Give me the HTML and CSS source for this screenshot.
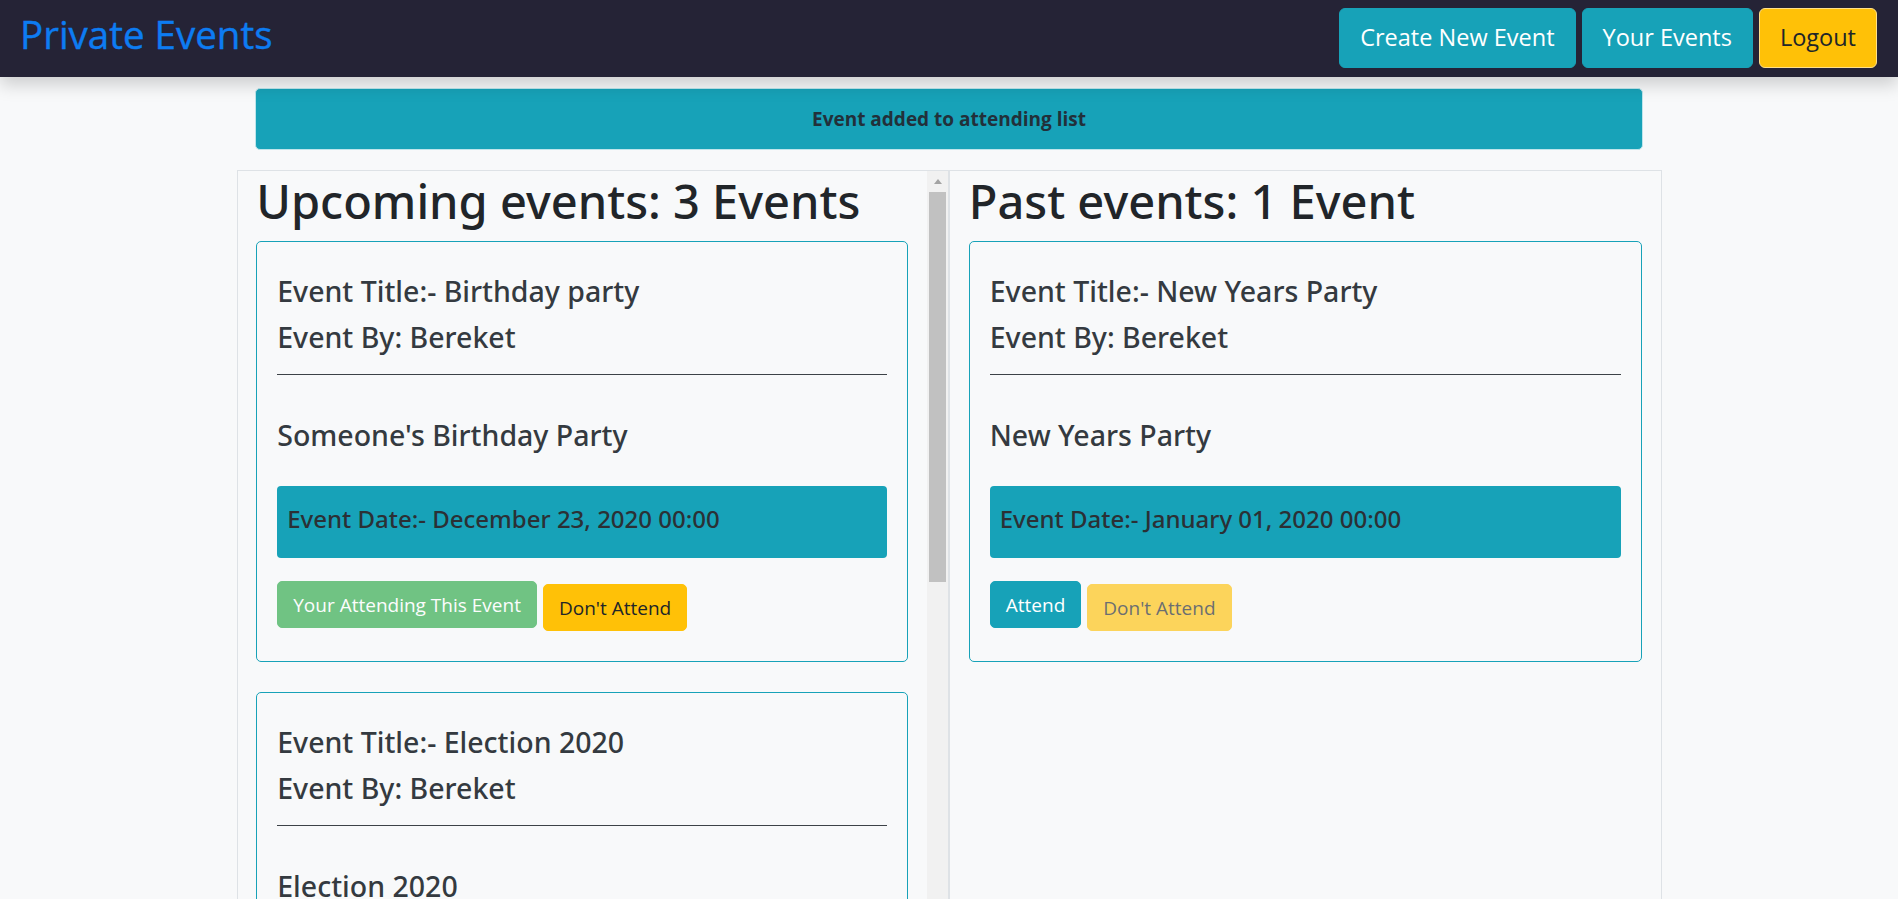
FILE: index.html
```html
<!DOCTYPE html>
<html lang="en">
<head>
<meta charset="utf-8">
<title>Private Events</title>
<link rel="stylesheet" href="styles.css">
</head>
<body>
<nav class="navbar">
  <a class="brand" href="#">Private Events</a>
  <div class="nav-actions">
    <a class="btn btn-lg btn-info" href="#">Create New Event</a>
    <a class="btn btn-lg btn-info" href="#">Your Events</a>
    <a class="btn btn-lg btn-warning btn-logout" href="#">Logout</a>
  </div>
</nav>
<main class="container">
  <div class="alert">Event added to attending list</div>
  <div class="row">
    <section class="col col-scroll">
      <div class="col-body">
        <h1 class="col-title">Upcoming events: 3 Events</h1>
        <article class="card">
          <h4 class="card-line">Event Title:- Birthday party</h4>
          <h4 class="card-line">Event By: Bereket</h4>
          <hr class="card-rule">
          <h4 class="card-desc">Someone's Birthday Party</h4>
          <h5 class="card-date">Event Date:- December 23, 2020 00:00</h5>
          <div class="card-actions">
            <a class="btn btn-success is-disabled" href="#">Your Attending This Event</a>
            <button class="btn btn-warning btn-form" type="button">Don't Attend</button>
          </div>
        </article>
        <article class="card">
          <h4 class="card-line">Event Title:- Election 2020</h4>
          <h4 class="card-line">Event By: Bereket</h4>
          <hr class="card-rule">
          <h4 class="card-desc">Election 2020</h4>
          <h5 class="card-date">Event Date:- December 31, 2020 00:00</h5>
          <div class="card-actions">
            <a class="btn btn-info" href="#">Attend</a>
            <button class="btn btn-warning btn-form is-disabled" type="button">Don't Attend</button>
          </div>
        </article>
      </div>
      <div class="scrollbar" aria-hidden="true">
        <span class="scroll-arrow"></span>
        <span class="scroll-thumb"></span>
      </div>
    </section>
    <section class="col">
      <div class="col-body">
        <h1 class="col-title">Past events: 1 Event</h1>
        <article class="card">
          <h4 class="card-line">Event Title:- New Years Party</h4>
          <h4 class="card-line">Event By: Bereket</h4>
          <hr class="card-rule">
          <h4 class="card-desc">New Years Party</h4>
          <h5 class="card-date">Event Date:- January 01, 2020 00:00</h5>
          <div class="card-actions">
            <a class="btn btn-info" href="#">Attend</a>
            <button class="btn btn-warning btn-form is-disabled" type="button">Don't Attend</button>
          </div>
        </article>
      </div>
    </section>
  </div>
</main>
</body>
</html>
```

FILE: styles.css
```css
* {
  box-sizing: border-box;
}

html,
body {
  height: 100%;
  overflow: hidden;
}

body {
  margin: 0;
  background: #f8f9fa;
  font-family: "Open Sans", "Noto Sans", sans-serif;
  color: #212529;
}

/* ---------- navbar ---------- */
.navbar {
  position: relative;
  z-index: 2;
  display: flex;
  align-items: flex-start;
  justify-content: space-between;
  height: 77px;
  padding: 8px 21px 0 20px;
  background: #252336;
  box-shadow: 0 8px 16px rgba(0, 0, 0, 0.17);
}

.brand {
  margin-top: 3px;
  font-size: 38.5px;
  line-height: 46px;
  color: #0d7cf2;
  text-decoration: none;
  -webkit-text-stroke: 0.4px #0d7cf2;
}

.nav-actions {
  display: flex;
  gap: 6px;
}

/* ---------- buttons ---------- */
.btn {
  display: inline-block;
  font-family: inherit;
  font-size: 19px;
  font-weight: 400;
  line-height: 30px;
  padding: 7.5px 15px;
  border: 1px solid transparent;
  border-radius: 5px;
  text-decoration: none;
  white-space: nowrap;
  cursor: pointer;
}

.btn-lg {
  font-size: 23.5px;
  line-height: 37.5px;
  padding: 10px 20px;
  border-radius: 6px;
}

.btn-info {
  background: #17a2b8;
  border-color: #17a2b8;
  color: #fff;
}

.btn-warning {
  background: #ffc107;
  border-color: #ffc107;
  color: #212529;
}

.btn-logout {
  border-color: #ffe08a;
}

.btn-success {
  background: #28a745;
  border-color: #28a745;
  color: #fff;
}

.is-disabled {
  opacity: 0.65;
  cursor: default;
}

.btn-form {
  margin-top: 3px;
}

/* ---------- layout ---------- */
.container {
  width: 1425px;
  margin: 11px auto 0;
  padding: 0 18.75px;
}

.alert {
  margin-bottom: 20px;
  padding: 15px 25px;
  background: #17a2b8;
  border: 1px solid #bee5eb;
  border-radius: 5px;
  font-size: 19px;
  font-weight: 700;
  line-height: 30px;
  text-align: center;
  color: #22303a;
}

.row {
  display: flex;
  height: 760px;
  margin: 0 -18.75px;
}

.col {
  display: flex;
  flex: 1 1 0;
  min-width: 0;
  border: 1px solid #dee2e6;
}

.col-body {
  flex: 1 1 auto;
  min-width: 0;
  padding: 0 18.75px;
}

/* drawn scrollbar of the upcoming list */
.scrollbar {
  display: flex;
  flex-direction: column;
  align-items: center;
  flex: 0 0 21px;
  background: #f1f1f1;
}

.scroll-arrow {
  width: 0;
  height: 0;
  margin: 8px 0 8px;
  border-left: 4.5px solid transparent;
  border-right: 4.5px solid transparent;
  border-bottom: 5px solid #a3a3a3;
}

.scroll-thumb {
  align-self: stretch;
  height: 390px;
  margin: 0 2px;
  background: #c1c1c1;
}

.col-title,
.card-line,
.card-desc,
.card-date {
  font-family: "Noto Sans", "Open Sans", sans-serif;
}

.col-title {
  margin: 0 0 10px;
  font-size: 47px;
  font-weight: 500;
  line-height: 60px;
  color: #212529;
}

/* ---------- cards ---------- */
.card {
  margin-bottom: 30px;
  padding: 31px 20px 30px;
  border: 1px solid #17a2b8;
  border-radius: 5px;
  color: #343a40;
}

.card-line,
.card-desc {
  margin: 0 0 10px;
  font-size: 28.5px;
  font-weight: 500;
  line-height: 36px;
}

.card-rule {
  margin: 19px 0 0;
  border: 0;
  border-top: 1px solid #3d4247;
}

.card-desc {
  margin: 41.5px 0 0;
}

.card-date {
  margin: 33.5px 0 0;
  padding: 18px 10px 24px;
  background: #17a2b8;
  border-radius: 4px;
  font-size: 24px;
  font-weight: 500;
  line-height: 30px;
  color: #2b3035;
}

.card-actions {
  display: flex;
  align-items: flex-start;
  gap: 6px;
  margin-top: 23px;
}
```
